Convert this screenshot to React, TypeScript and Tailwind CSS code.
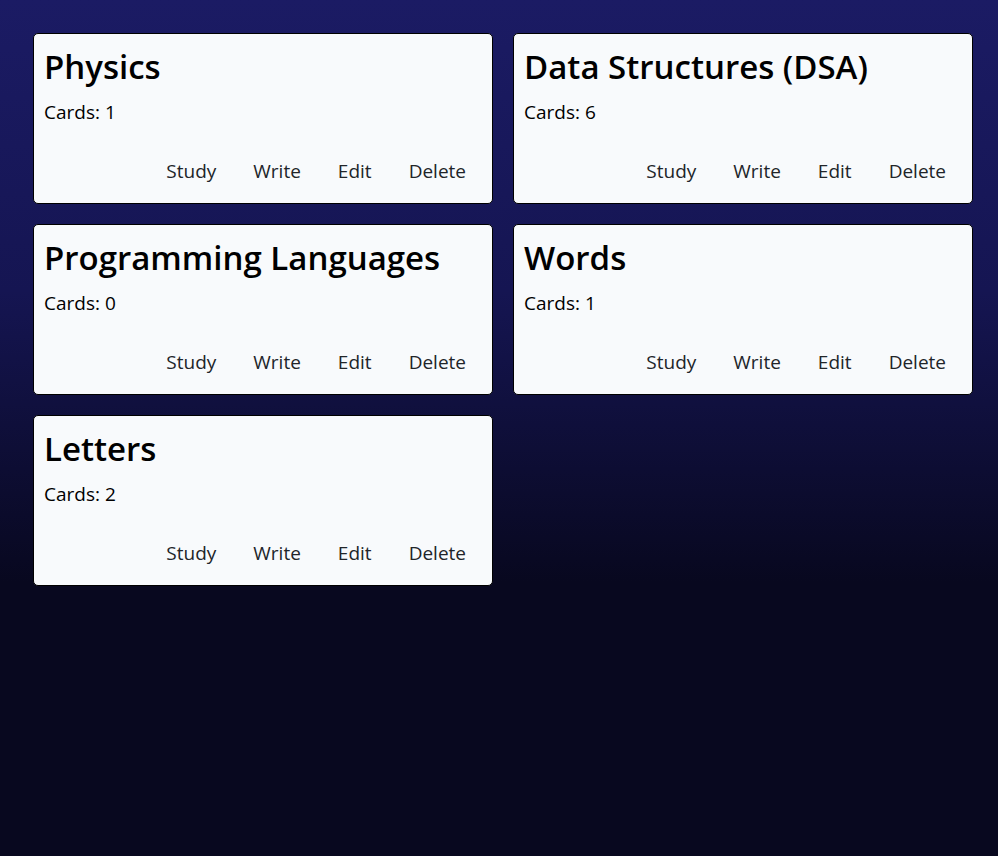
const decks = [
  { name: "Physics", cards: 1 },
  { name: "Data Structures (DSA)", cards: 6 },
  { name: "Programming Languages", cards: 0 },
  { name: "Words", cards: 1 },
  { name: "Letters", cards: 2 },
];

const actions = ["Study", "Write", "Edit", "Delete"];

function DeckCard({ name, cards }: { name: string; cards: number }) {
  return (
    <article className="rounded-[5px] border border-black bg-[#f8fafc] p-2.5 text-black">
      <h2 className="text-[33px] leading-[46px] font-semibold">{name}</h2>
      <p className="mt-2 text-[19px] leading-7">Cards: {cards}</p>
      <div className="mt-[23px] flex justify-end gap-[5px]">
        {actions.map((action) => (
          <button key={action} type="button" className="px-4 py-2 text-[19px] leading-7 text-[#212529]">
            {action}
          </button>
        ))}
      </div>
    </article>
  );
}

export default function App() {
  return (
    <main className="min-h-screen bg-[linear-gradient(to_bottom,#1b1b64_0%,#151552_34%,#08081f_68%,#08081f_100%)] py-[33px] pr-[25px] pl-[33px] font-['Open_Sans','Noto_Sans',sans-serif]">
      <div className="grid grid-cols-2 gap-5">
        {decks.map((deck) => (
          <DeckCard key={deck.name} {...deck} />
        ))}
      </div>
    </main>
  );
}
